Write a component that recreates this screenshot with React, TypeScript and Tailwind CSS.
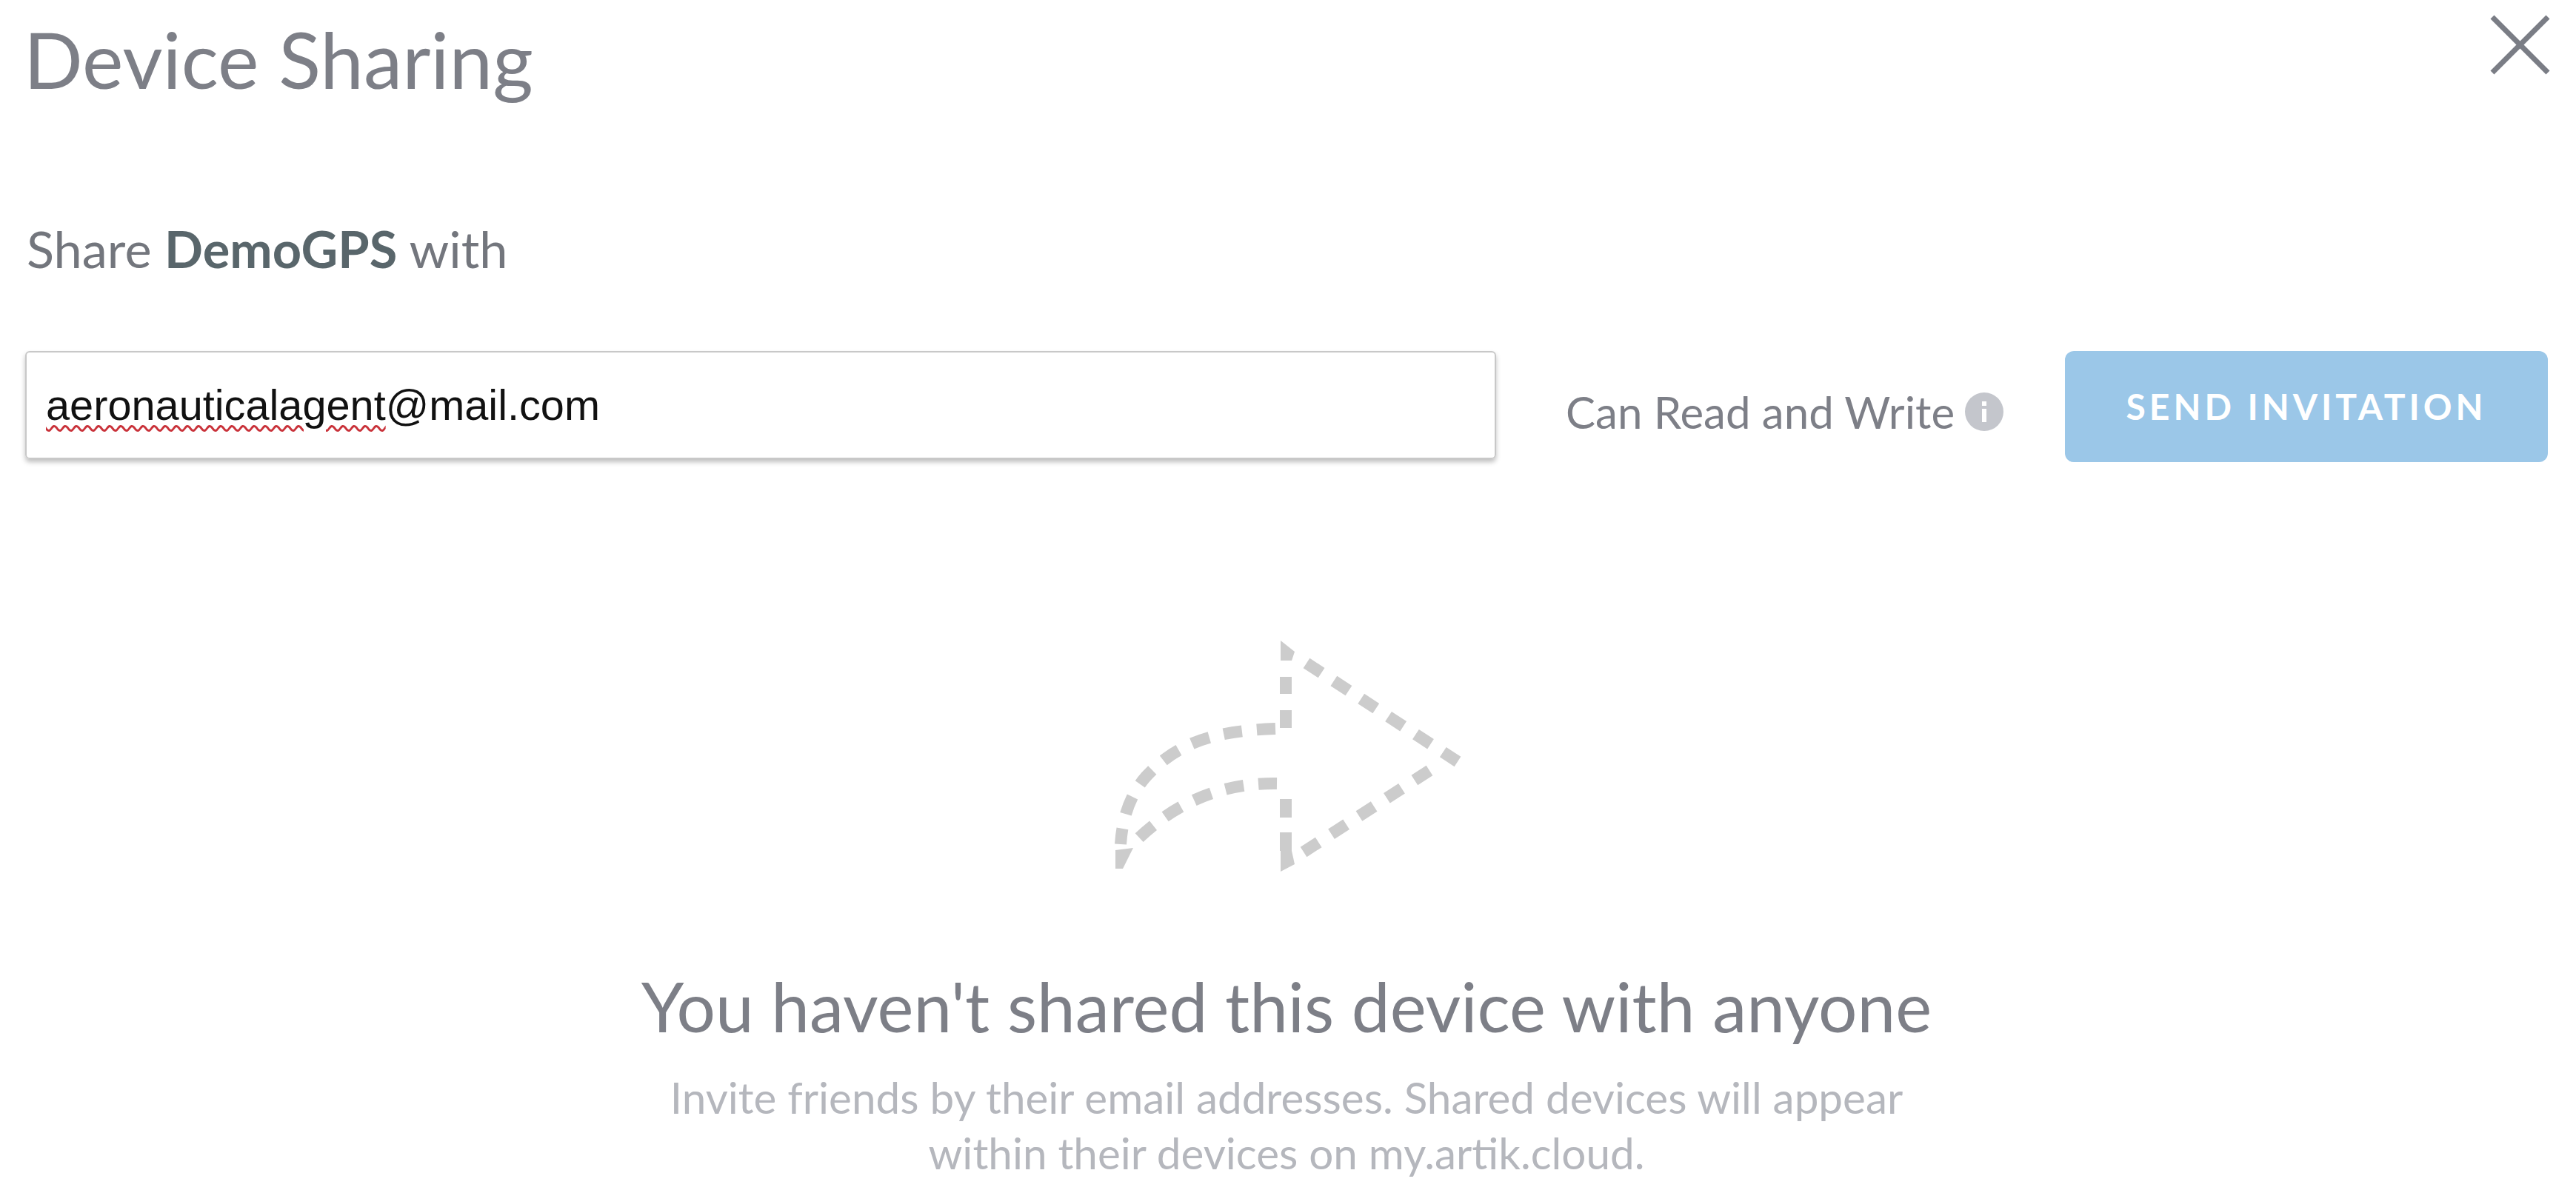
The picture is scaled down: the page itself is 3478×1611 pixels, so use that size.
const lato = "font-['Lato','Open_Sans',sans-serif]";

function ShareArrow() {
  return (
    <svg width="480" height="340" viewBox="1497 850 480 340" fill="none" stroke="#cccccc" strokeWidth="16">
      {/* arrow head */}
      <path d="M1736 890 L1736 981" strokeDasharray="0 22 23 22 23" />
      <path d="M1736 1147 L1736 1057" strokeDasharray="25 20 25 20" />
      <path d="M1764 893.5 L1968 1026.5" strokeDasharray="24 20" />
      <path d="M1930 1038.5 L1760 1148.5" strokeDasharray="24 20.6" />
      <polygon points="1729,863 1748,878 1744,890 1729,890" fill="#cccccc" stroke="none" />
      <polygon points="1729,1175 1748,1165 1744,1147 1729,1147" fill="#cccccc" stroke="none" />
      {/* tail */}
      <path d="M1722 982 C1640 985 1590 1000 1547 1047 C1525 1072 1515 1105 1513 1138" strokeDasharray="25 20" />
      <path d="M1724 1056 C1655 1055 1590 1078 1533 1134" strokeDasharray="25 20" />
      <polygon points="1506,1146 1530,1143 1516,1171 1506,1171" fill="#cccccc" stroke="none" />
    </svg>
  );
}

function InfoIcon() {
  return (
    <svg width="52" height="52" viewBox="0 0 52 52">
      <circle cx="26" cy="26" r="26" fill="#c4c6cc" />
      <rect x="23" y="22" width="6" height="18" fill="#ffffff" />
      <rect x="23" y="12" width="6" height="6" fill="#ffffff" />
    </svg>
  );
}

function CloseIcon() {
  return (
    <svg width="83" height="83" viewBox="0 0 83 83" stroke="#7a7d85" strokeWidth="7" className="mt-[4px]">
      <line x1="4" y1="4" x2="79" y2="79" />
      <line x1="79" y1="4" x2="4" y2="79" />
    </svg>
  );
}

export default function App() {
  return (
    <div className={`w-[3478px] h-[1611px] bg-white overflow-hidden flex flex-col ${lato}`}>
      {/* Header */}
      <div className="flex justify-between items-start pl-[32px] pr-[34px] pt-[15px]">
        <h1 className="mt-[2px] text-[105px] leading-[125px] text-[#7d7f87] font-normal">Device Sharing</h1>
        <CloseIcon />
      </div>

      <p className="mt-[154px] pl-[36px] text-[68.5px] leading-[80px] text-[#73767d]">
        Share <span className="font-bold text-[#59666b]">DemoGPS</span> with
      </p>

      {/* Invite row */}
      <div className="flex items-start mt-[98px] pl-[34px] pr-[38px]">
        <div className="w-[1986px] h-[146px] rounded-[6px] border-2 border-[#c8c8c8] shadow-[0_4px_6px_rgba(0,0,0,0.25)] flex items-center pl-[26px] font-['Liberation_Sans',sans-serif] text-[57.7px] text-[#111111]">
          <span className="underline decoration-wavy decoration-[#c9323a] decoration-[3px] underline-offset-[7px]">aeronauticalagent</span>
          <span>@mail.com</span>
        </div>
        <div className="flex items-center gap-[14px] ml-[94px] mt-[50px]">
          <span className="text-[60px] leading-[64px] text-[#7d7f87]">Can Read and Write</span>
          <InfoIcon />
        </div>
        <button className="ml-auto w-[652px] h-[150px] rounded-[12px] bg-[#9bc7e8] text-white font-bold text-[48px] tracking-[5px]">
          SEND INVITATION
        </button>
      </div>

      {/* Empty state */}
      <div className="flex flex-col items-center mt-[228px] pr-[4px]">
        <ShareArrow />
        <h2 className="mt-[112px] text-[92.6px] leading-[110px] text-[#7d7f87] font-normal">You haven't shared this device with anyone</h2>
        <p className="mt-[30px] text-[58.4px] leading-[75px] text-[#b5b7bd] text-center">
          Invite friends by their email addresses. Shared devices will appear<br />
          within their devices on my.artik.cloud.
        </p>
      </div>
    </div>
  );
}
